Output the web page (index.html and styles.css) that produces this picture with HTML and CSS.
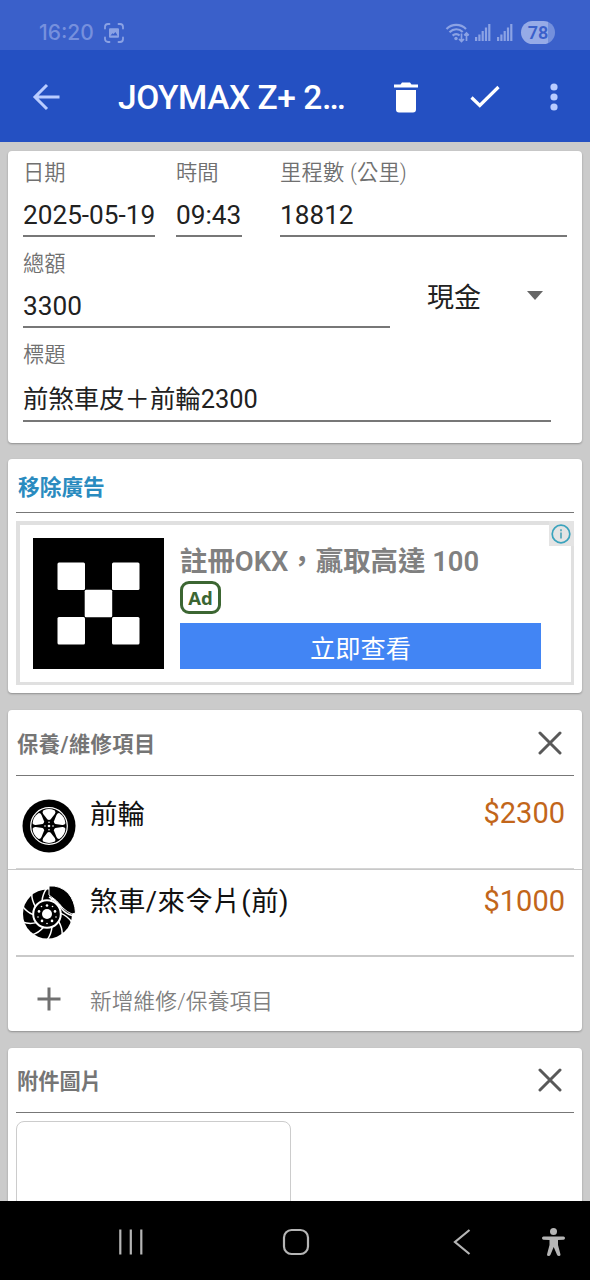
FILE: index.html
```html
<!DOCTYPE html>
<html lang="zh-Hant">
<head>
<meta charset="utf-8">
<title>JOYMAX Z+</title>
<link rel="stylesheet" href="styles.css">
</head>
<body>
<div class="screen">
  <div class="status">
    <span class="clock">16:20</span>
    <svg class="capture" width="20" height="20" viewBox="0 0 20 20" fill="none" stroke="currentColor" stroke-width="1.8" stroke-linecap="round"><path d="M1 5.5V4a3 3 0 0 1 3-3h1.500M14.500 1H16a3 3 0 0 1 3 3v1.500M19 14.500V16a3 3 0 0 1-3 3h-1.500M5.500 19H4a3 3 0 0 1-3-3v-1.500"/><path d="M6 5.200h8q1 0 1 1v7.600q0 1-1 1H6q-1 0-1-1V6.200q0-1 1-1zM6.500 12.500h7l-2-3.500-2 2-1-.800z" fill="currentColor" fill-rule="evenodd" stroke="none"/></svg>
    <div class="signals">
      <svg width="25" height="20" viewBox="0 0 25 20" fill="none" stroke="currentColor" stroke-width="2.200"><path d="M1.500 6C7 .6 15.500 .6 21 6M4.500 9.300c4-4 9.500-4 13.200-.3M7.600 12.600c2.200-2.100 5-2.100 7 0"/><circle cx="11" cy="15.500" r="1.700" fill="currentColor" stroke="none"/><path d="M16.500 10.500v8M14 16l2.500 2.500L19 16M21.500 18v-8M19.200 12.300l2.300-2.300 2.300 2.300" stroke-width="1.700"/></svg>
      <svg width="16" height="17" viewBox="0 0 16 17" fill="currentColor"><path d="M0 13h2.200v4H0zM3.300 10.500h2.200V17H3.300zM6.600 7h2.200v10H6.600zM9.900 3.500h2.200V17H9.900zM13.200 0h2.200v17h-2.200z"/></svg>
      <svg class="sim2" width="16" height="17" viewBox="0 0 16 17" fill="currentColor"><path d="M0 13h2.200v4H0zM3.300 10.500h2.200V17H3.300zM6.600 7h2.200v10H6.600zM9.900 3.500h2.200V17H9.900zM13.200 0h2.200v17h-2.200z"/></svg>
      <span class="battery">78</span>
    </div>
  </div>
  <header class="appbar">
    <svg class="back" width="28" height="28" viewBox="0 0 28 28" fill="none" stroke="#b9ccff" stroke-width="3"><path d="M27.500 14H3M15 2 3 14l12 12"/></svg>
    <h1>JOYMAX Z+ 2…</h1>
    <svg class="trash" width="24" height="31" viewBox="0 0 24 31" fill="#fff"><path d="M0 2.500h6.500L8 .5h8l1.500 2H24v3H0zM2 8h20v19.500q0 3-3 3H5q-3 0-3-3z"/></svg>
    <svg class="check" width="30" height="24" viewBox="0 0 30 24" fill="none" stroke="#fff" stroke-width="3.200"><path d="M1.500 12.500 9.800 20.500 28.500 2"/></svg>
    <svg class="more" width="8" height="28" viewBox="0 0 8 28" fill="#b9ccff"><circle cx="4" cy="4" r="3.600"/><circle cx="4" cy="14" r="3.600"/><circle cx="4" cy="24" r="3.600"/></svg>
  </header>
  <main class="content">
    <section class="card form">
      <div class="row">
        <label class="field date"><span>日期</span><b>2025-05-19</b></label>
        <label class="field time"><span>時間</span><b>09:43</b></label>
        <label class="field odo"><span>里程數 (公里)</span><b>18812</b></label>
      </div>
      <div class="row">
        <label class="field total"><span>總額</span><b>3300</b></label>
        <div class="select">現金<i class="caret"></i></div>
      </div>
      <label class="field caption"><span>標題</span><b>前煞車皮＋前輪2300</b></label>
    </section>

    <section class="card ads">
      <a class="remove">移除廣告</a>
      <div class="ad">
        <svg class="logo" width="131" height="131" viewBox="0 0 131 131"><path d="M0 0h131v131H0z"/><g fill="#fff"><rect x="24.500" y="24.500" width="27.500" height="27.500" rx="1.500"/><rect x="79" y="24.500" width="27.500" height="27.500" rx="1.500"/><rect x="51.700" y="51.700" width="27.500" height="27.500" rx="1.500"/><rect x="24.500" y="79" width="27.500" height="27.500" rx="1.500"/><rect x="79" y="79" width="27.500" height="27.500" rx="1.500"/></g></svg>
        <div class="adbody">
          <div class="adtitle">註冊OKX，贏取高達 100</div>
          <div class="tag">Ad</div>
          <div class="cta">立即查看</div>
        </div>
        <div class="info"><svg width="20" height="20" viewBox="0 0 20 20"><circle cx="10" cy="10" r="8.800" fill="none" stroke="#3aa3bd" stroke-width="1.700"/><path d="M9.100 8.500h1.800v6H9.100zM9.100 5.300h1.800v1.900H9.100z" fill="#5eabbc"/></svg></div>
      </div>
    </section>

    <section class="card items">
      <div class="head"><h2>保養/維修項目</h2><svg width="24" height="24" viewBox="0 0 24 24" stroke="#595959" stroke-width="3" stroke-linecap="round"><path d="m2 2 20 20M22 2 2 22"/></svg></div>
      <div class="item first">
        <svg width="54" height="54" viewBox="-27 -27 54 54"><circle r="26.500"/><circle r="18.300" fill="none" stroke="#fff" stroke-width="1.200"/>
          <g fill="#fff"><path id="gap" d="M-1.500-6.500-5.800-12Q-7.200-14-5.800-15.600Q0-18.400 5.800-15.600Q7.200-14 5.800-12L1.500-6.500Q0-5.600-1.500-6.500z"/><use href="#gap" transform="rotate(60)"/><use href="#gap" transform="rotate(120)"/><use href="#gap" transform="rotate(180)"/><use href="#gap" transform="rotate(240)"/><use href="#gap" transform="rotate(300)"/><circle r="1.300"/><circle cx="4" r=".8"/><circle cx="-4" r=".8"/><circle cy="3.800" r=".8"/><circle cy="-3.800" r=".8"/></g></svg>
        <span>前輪</span><em>$2300</em>
      </div>
      <div class="item second">
        <svg width="54" height="54" viewBox="-27 -27 54 54"><circle cx="-1.500" cy="1" r="24.500"/>
          <g transform="translate(-2 1)" fill="none" stroke="#fff" stroke-width="1.500"><path id="slot" d="M-5-12.500Q-4.500-20 0-26"/><use href="#slot" transform="rotate(36)"/><use href="#slot" transform="rotate(72)"/><use href="#slot" transform="rotate(108)"/><use href="#slot" transform="rotate(144)"/><use href="#slot" transform="rotate(180)"/><use href="#slot" transform="rotate(216)"/><use href="#slot" transform="rotate(252)"/><use href="#slot" transform="rotate(288)"/><use href="#slot" transform="rotate(324)"/><circle r="13.800" stroke-width="2"/></g>
          <g transform="translate(-2 1)" fill="#fff"><circle r="5"/><circle cy="-8.500" r="1.300"/><circle cx="8" cy="-2.600" r="1.300"/><circle cx="5" cy="6.900" r="1.300"/><circle cx="-5" cy="6.900" r="1.300"/><circle cx="-8" cy="-2.600" r="1.300"/><circle cx="5.500" cy="-7.500" r=".8"/><circle cx="-5.500" cy="-7.500" r=".8"/><circle cx="9" cy="3" r=".8"/><circle cx="-9" cy="3" r=".8"/><circle cy="9.500" r=".8"/></g>
          <path d="M0-27Q11-28 19-20 26-12 26.500 0L23 1Q18-1 14-5 8-13 0-18z" stroke="#fff" stroke-width="1"/><path d="M0-16Q8-12 13-4 17 1 23 2.500" fill="none" stroke="#fff" stroke-width="1.600"/></svg>
        <span>煞車/來令片(前)</span><em>$1000</em>
      </div>
      <div class="add"><svg width="24" height="24" viewBox="0 0 24 24" stroke="#707070" stroke-width="3"><path d="M12 .5v23M.5 12h23"/></svg><span>新增維修/保養項目</span></div>
    </section>

    <section class="card photos">
      <div class="head"><h2>附件圖片</h2><svg width="24" height="24" viewBox="0 0 24 24" stroke="#595959" stroke-width="3" stroke-linecap="round"><path d="m2 2 20 20M22 2 2 22"/></svg></div>
      <div class="slot"></div>
    </section>
  </main>
  <nav class="nav">
    <svg class="recents" width="26" height="26" viewBox="0 0 26 26" stroke="#b5b5b5" stroke-width="2.200"><path d="M2.300.5v25M12.800.5v25M23.300.5v25"/></svg>
    <svg class="home" width="28" height="28" viewBox="0 0 28 28" fill="none" stroke="#b5b5b5" stroke-width="2.200"><rect x="2" y="2" width="24" height="24" rx="7.500"/></svg>
    <svg class="prev" width="18" height="28" viewBox="0 0 18 28" fill="none" stroke="#b5b5b5" stroke-width="2.200"><path d="M16.500 2 2 14l14.500 12"/></svg>
    <svg class="access" width="24" height="28" viewBox="0 0 24 28" fill="#b5b5b5"><circle cx="11.500" cy="3.500" r="3.500"/><path d="M1.500 8.500h20q1.500 0 1.500 1.600t-1.500 1.600L16 12v5l2.500 9.500q0 1.500-1.500 1.500t-2-1.200L11.700 19 8.500 26.800Q8 28 6.500 28T5 26.500L7.500 17v-5l-6-.3Q0 11.700 0 10.100t1.500-1.600z"/></svg>
  </nav>
</div>
</body>
</html>
```
FILE: styles.css
```css
* { box-sizing: border-box; }
body { margin: 0; font-family: Roboto, "Noto Sans CJK TC", sans-serif; color: #212121; white-space: nowrap; }
svg { display: block; flex: none; }
h1, h2 { margin: 0; }
.screen { width: 590px; height: 1280px; display: flex; flex-direction: column; overflow: hidden; background: #cbcbcb; }

.status { flex: none; height: 50px; padding: 15px 35px 0 39px; display: flex; align-items: center; background: #3a60ca; color: #8ba2e4; }
.clock { font: 500 21px/36px Inter, Roboto, sans-serif; width: 65px; color: #7690dd; }
.signals { margin-left: auto; display: flex; align-items: center; gap: 5px; }
.sim2 { margin: 0 3px 0 1px; }
.battery { width: 34px; height: 23px; border-radius: 12px; background: linear-gradient(90deg, #96abe7 80%, #7490dc 80%); color: #3a60ca; font: 600 18px/24px Roboto, sans-serif; text-align: center; }

.appbar { flex: none; height: 92px; padding: 2px 32px 0; display: flex; align-items: center; background: #2450c2; }
.appbar h1 { width: 275px; margin-left: 58px; padding-top: 2px; color: #fff; font-size: 33.500px; font-weight: 500; line-height: 40px; letter-spacing: -.45px; }
.check { margin-left: 52px; }
.trash { margin-left: 1px; }
.more { margin-left: auto; }

.content { flex: 1; min-height: 0; overflow: hidden; padding: 9px 8px 0 8px; display: flex; flex-direction: column; gap: 16px; }
.card { flex: none; background: #fff; border-radius: 4px; box-shadow: 0 1px 2px rgba(0, 0, 0, .3); }

.form { height: 292px; padding: 0 15px; display: flex; flex-direction: column; gap: 5px; }
.row { display: flex; }
.field { display: flex; flex-direction: column; }
.field span { height: 42px; font-size: 21.300px; line-height: 43px; font-weight: 350; color: #707070; }
.field b { height: 44px; background: linear-gradient(#777, #777) 0 42px / 100% 2px no-repeat; font-size: 26.200px; line-height: 45px; font-weight: 400; }
.date { width: 132px; }
.time { width: 66px; margin-left: 21px; }
.odo { flex: 1; margin-left: 38px; }
.odo span { letter-spacing: .2px; }
.total { width: 367px; }
.select { flex: 1; margin-left: 37px; padding: 20px 24px 0 0; display: flex; align-items: center; justify-content: space-between; font-size: 27px; }
.caret { border: 8px solid transparent; border-top: 9px solid #666; border-bottom: 0; }
.caption { width: 528px; }
.caption b { height: 47px; line-height: 49px; font-size: 25.400px; background-position: 0 45px; }

.ads { height: 234px; padding: 0 8px; }
.remove { display: block; height: 54px; padding-left: 2px; border-bottom: 1px solid #777; color: #2a8bbf; font-size: 21.700px; font-weight: 700; line-height: 58px; }
.ad { position: relative; height: 164px; margin-top: 8px; border: 4px solid #e0e0e0; border-width: 4px 3px 3px 4px; padding: 13px 30px 0 13px; display: flex; gap: 16px; }
.adbody { flex: 1; }
.adtitle { height: 43px; color: #808080; font-size: 27.400px; font-weight: 600; line-height: 48px; }
.tag { width: 41px; height: 33px; border: 3px solid #3c6632; border-radius: 9px; color: #3c6632; font: 700 18.500px/27px "Noto Sans", "Open Sans", sans-serif; text-align: center; }
.cta { height: 46px; margin-top: 9px; background: #4285f4; color: #fff; font-size: 25.300px; line-height: 53px; text-align: center; }
.info { position: absolute; top: -4px; right: -3px; width: 25px; height: 25px; padding: 3px 2px; background: #e4e4e4; }

.items { height: 321px; margin-top: 1px; }
.head { height: 65px; margin: 0 8px; padding: 0 12px 0 1px; border-bottom: 1px solid #777; display: flex; align-items: center; justify-content: space-between; }
.head h2 { padding-top: 4px; color: #757575; font-size: 21.200px; font-weight: 600; line-height: 61px; }
.items .head { height: 66px; }
.items h2 { letter-spacing: .5px; }
.item { display: flex; padding: 0 17px 0 14px; color: #111; font-size: 27.400px; line-height: 40px; }
.item svg { margin-top: 5px; }
.item span { margin-left: 14px; padding-top: 1px; }
.item em { margin-left: auto; font-style: normal; color: #c2661a; font-size: 29px; }
.first { height: 94px; padding-top: 18px; border-bottom: 1px solid #c8c8c8; background: linear-gradient(#d5d5d5, #d5d5d5) 8px 100% / 558px 1px no-repeat; }
.first em { line-height: 38px; }
.second { height: 87px; margin: 0 8px; padding: 11px 9px 0 6px; border-bottom: 2px solid #c9c9c9; }
.second span { letter-spacing: .5px; }
.add { height: 74px; padding: 10px 0 0 29px; display: flex; align-items: center; gap: 29px; color: #808080; font-size: 21.700px; }
.add span { font-weight: 350; letter-spacing: .1px; }

.photos { height: 300px; margin-top: 1px; }
.photos .head h2 { padding-top: 2px; }
.slot { width: 275px; height: 200px; margin: 8px 0 0 8px; border: 1.500px solid #ccc; border-radius: 8px; }

.nav { flex: none; height: 79px; padding: 3px 24px 0 118px; display: flex; align-items: center; background: #000; }
.home { margin-left: 138px; }
.prev { margin-left: 143px; }
.access { margin-left: auto; }
```
